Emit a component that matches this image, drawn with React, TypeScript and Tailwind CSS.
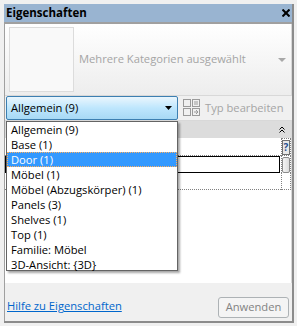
import React from "react";

const items = [
  "Allgemein (9)",
  "Base (1)",
  "Door (1)",
  "Möbel (1)",
  "Möbel (Abzugskörper) (1)",
  "Panels (3)",
  "Shelves (1)",
  "Top (1)",
  "Familie: Möbel",
  "3D-Ansicht: {3D}",
];

function TypeEditIcon() {
  return (
    <svg width="17" height="18" viewBox="0 0 17 18" fill="none" stroke="#9a9a9a" strokeWidth="1">
      <rect x="0.5" y="0.5" width="7" height="7" />
      <rect x="9.5" y="0.5" width="7" height="7" />
      <line x1="11" y1="3" x2="15" y2="3" />
      <line x1="11" y1="5" x2="15" y2="5" />
      <rect x="0.5" y="9.5" width="7" height="7" />
      <rect x="9.5" y="9.5" width="7" height="7" />
      <path d="M11 13 L15 13 M13 11 L15 13 L13 15" />
    </svg>
  );
}

export default function App() {
  return (
    <div
      className="relative w-[297px] h-[326px] bg-[#f0f0f0] overflow-hidden flex flex-col pt-[4px] pl-[4px] pr-[3px] pb-[3px] text-[11.2px] text-black"
      style={{ fontFamily: '"Segoe UI", "Open Sans", "Noto Sans", sans-serif' }}
    >
      <div className="flex-1 flex flex-col border-r-2 border-b-2 border-[#8c8c8c]">
        {/* title bar */}
        <div className="h-[18px] bg-[#99b4d1] flex items-center justify-between pl-[2px] pr-[2px]">
          <span className="font-bold text-[11.5px] leading-none">Eigenschaften</span>
          <svg width="8" height="8" viewBox="0 0 8 8" stroke="#000" strokeWidth="2">
            <line x1="0.5" y1="0.5" x2="7.5" y2="7.5" />
            <line x1="7.5" y1="0.5" x2="0.5" y2="7.5" />
          </svg>
        </div>
        <div className="h-[2px] bg-[#a0a0a0]" />
        <div className="flex-1 flex flex-col border-l border-[#a0a0a0]">
          {/* type selector */}
          <div className="h-[72px] bg-gradient-to-b from-white to-[#ededed] border-b border-r border-[#d8d8d8] flex items-center pl-[4px] pr-[5px]">
            <div className="w-[65px] h-[65px] border border-[#dcdcdc] bg-[#f9f9f9]" />
            <span className="ml-[5px] flex-1 text-[#a5a5a5] whitespace-nowrap">Mehrere Kategorien ausgewählt</span>
            <svg width="8" height="4" viewBox="0 0 8 4" fill="#a8a8a8">
              <path d="M0 0 H8 L4 4 Z" />
            </svg>
          </div>
          {/* combo row */}
          <div className="h-[25px] bg-[#f0f0f0] flex items-center pl-[1px] pr-[4px] border-b border-[#d8d8d8]">
            <div className="w-[172px] h-[24px] rounded-[2px] border border-[#3c7fb1] bg-gradient-to-b from-[#eaf6fd] via-[#bee6fd] to-[#a7d9f5] flex items-center pl-[4px] pr-[5px]">
              <span className="flex-1">Allgemein (9)</span>
              <svg width="7" height="4" viewBox="0 0 7 4" fill="#000">
                <path d="M0 0 H7 L3.5 4 Z" />
              </svg>
            </div>
            <div className="ml-[5px] flex items-center whitespace-nowrap">
              <TypeEditIcon />
              <span className="ml-[5px] text-[#a5a5a5]">Typ bearbeiten</span>
            </div>
          </div>
          {/* property grid */}
          <div className="flex-1 bg-white flex flex-col border-r border-[#d8d8d8]">
            <div className="h-[17px] bg-[#dcdcdc] flex items-center justify-end pr-[6px]">
              <svg width="6" height="7" viewBox="0 0 6 7" fill="none" stroke="#000" strokeWidth="1">
                <path d="M0.5 3.5 L3 1 L5.5 3.5 M0.5 6.5 L3 4 L5.5 6.5" />
              </svg>
            </div>
            <div className="flex h-[18px]">
              <div className="flex-1 border-b border-dotted border-[#808080]" />
              <div className="w-[10px] border border-dotted border-[#808080] flex items-center justify-center">
                <div className="w-[8px] h-[15px] border border-[#707070] bg-[#e8e8e8] text-[10px] leading-[13px] text-center font-bold text-[#2a4f8f]">?</div>
              </div>
            </div>
            <div className="flex h-[17px]">
              <div className="flex-1 border border-black mr-[1px]" />
              <div className="w-[10px] border-x border-dotted border-[#808080] flex items-center justify-center">
                <div className="w-[8px] h-[16px] rounded-[2px] border border-[#8a8a8a] bg-gradient-to-r from-[#f4f4f4] to-[#dcdcdc]" />
              </div>
            </div>
            <div className="flex h-[17px]">
              <div className="flex-1 border-b border-dotted border-[#808080]" />
              <div className="w-[10px] border-x border-b border-dotted border-[#808080]" />
            </div>
          </div>
          {/* bottom */}
          <div className="h-[38px] bg-[#f0f0f0] flex items-end justify-between pl-[2px] pr-[3px] pb-[3px]">
            <span className="text-[#0066cc] underline mb-[3px]">Hilfe zu Eigenschaften</span>
            <div className="w-[71px] h-[21px] rounded-[3px] border border-[#adb2b5] bg-[#f4f4f4] flex items-center justify-center text-[#838383]">
              Anwenden
            </div>
          </div>
        </div>
      </div>

      {/* dropdown list */}
      <div className="absolute left-[6px] top-[121px] w-[172px] h-[150px] bg-white border border-[#646464] shadow-[2px_2px_2px_rgba(0,0,0,0.35)] flex flex-col">
        {items.map((it, i) => (
          <div
            key={it}
            className={
              i === 2
                ? "h-[15px] leading-[13px] pl-[3px] bg-[#3399ff] text-white border border-dotted border-[#ffb060] whitespace-nowrap"
                : "h-[15px] leading-[15px] pl-[4px] whitespace-nowrap"
            }
          >
            {it}
          </div>
        ))}
      </div>
    </div>
  );
}
